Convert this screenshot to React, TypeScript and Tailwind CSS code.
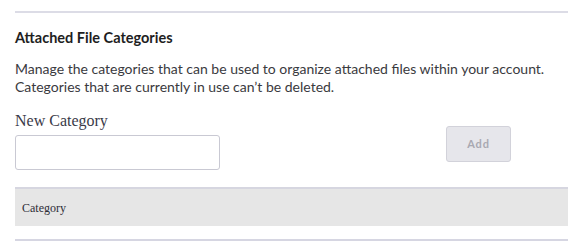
import React from "react";

export default function App() {
  return (
    <div className="w-[580px] h-[248px] bg-white overflow-hidden">
      <div className="ml-[15px] mr-[12px] pt-[11px]">
        <div className="h-[2px] bg-[#dcdce6]" />
        <h2 className="mt-[16px] text-[14.5px] leading-[17px] font-bold text-[#1e1e22] [font-family:Lato,sans-serif]">
          Attached File Categories
        </h2>
        <p className="mt-[14px] text-[14px] leading-[18px] text-[#3a3a40] [font-family:Lato,sans-serif]">
          Manage the categories that can be used to organize attached files within your account.
          <br />
          Categories that are currently in use can’t be deleted.
        </p>
        <div className="mt-[15px] flex items-start">
          <div className="flex flex-col">
            <label className="text-[16px] leading-[20px] text-[#3a3a48] [font-family:'Liberation_Serif',serif]">
              New Category
            </label>
            <input
              type="text"
              className="mt-[4px] w-[205px] h-[35px] border border-[#c9c9d3] rounded-[3px] bg-white outline-none"
            />
          </div>
          <button
            className="ml-[226px] mt-[15px] w-[65px] h-[36px] rounded-[3px] border border-[#d2d2da] bg-[#e6e6eb] text-[11px] font-bold text-[#a9a9b2] tracking-[0.8px] [font-family:Lato,sans-serif]"
            disabled
          >
            Add
          </button>
        </div>
        <div className="mt-[17px] w-[553px] h-[39px] bg-[#e6e6e6] border-t-2 border-[#d6d6e0] flex items-center pl-[7px]">
          <span className="text-[12px] text-[#2e2e38] [font-family:'Liberation_Serif',serif]">
            Category
          </span>
        </div>
        <div className="mt-[13px] w-[553px] h-[2px] bg-[#d6d6e2]" />
      </div>
    </div>
  );
}
